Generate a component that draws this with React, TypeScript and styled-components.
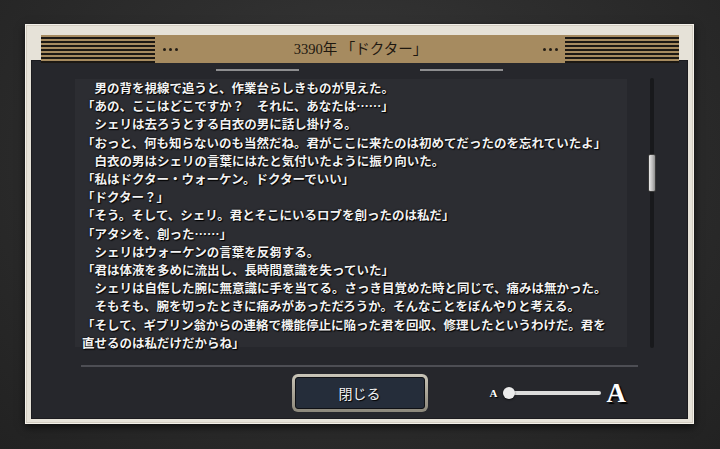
import styled, { createGlobalStyle } from "styled-components";

const GlobalStyle = createGlobalStyle`
  html,
  body {
    margin: 0;
    padding: 0;
    width: 720px;
    height: 449px;
    overflow: hidden;
  }

  body {
    background: #2a2a2a;
    font-family: "Liberation Serif", "Noto Sans CJK JP", serif;
  }
`;

const Screen = styled.div`
  box-sizing: border-box;
  width: 720px;
  height: 449px;
  padding: 24px 26px 25px 25px;
  background: radial-gradient(
    ellipse at 50% 35%,
    #3b3b3b 0%,
    #2e2e2e 45%,
    #222222 100%
  );
`;

const Frame = styled.section`
  box-sizing: border-box;
  display: flex;
  height: 400px;
  flex-direction: column;
  padding: 10px 5px 4px;
  border: 1px solid #f4f1ea;
  background: #e6e2d8;
  box-shadow:
    0 3px 8px rgba(0, 0, 0, 0.65),
    inset 0 0 0 1px #d2ccc0;
`;

const HeaderBand = styled.header`
  position: relative;
  z-index: 1;
  display: grid;
  height: 28px;
  grid-template-columns: 114px auto 1fr auto 114px;
  align-items: center;
  margin: 0 9px -3px 10px;
  background: #a68b60;
`;

const Stripes = styled.div`
  height: 100%;
  background: repeating-linear-gradient(
    to bottom,
    #a68b60 0 2px,
    #1c1813 2px 4px
  );
`;

const Dots = styled.div<{ $side: "left" | "right" }>`
  display: flex;
  gap: 3px;
  margin: ${({ $side }) => ($side === "left" ? "0 0 0 8px" : "0 7px 0 0")};

  span {
    width: 3px;
    height: 3px;
    border-radius: 50%;
    background: #231d15;
  }
`;

const Title = styled.h1`
  margin: 0;
  color: #1e1810;
  font-size: 14.5px;
  font-weight: 400;
  line-height: 1;
  text-align: center;
  white-space: nowrap;
`;

const Panel = styled.div`
  display: flex;
  flex: 1;
  flex-direction: column;
  background: #26272c;
  box-shadow: inset 0 0 0 1px #1b1b1f;
`;

const Ornaments = styled.div`
  display: flex;
  justify-content: center;
  gap: 121px;
  margin-top: 9px;
`;

const Ornament = styled.div`
  width: 83px;
  height: 2px;
  background: #8e8e90;
`;

const Body = styled.div`
  display: flex;
  height: 275px;
  margin-top: 7px;
  padding-left: 44px;
`;

const TextBox = styled.div`
  box-sizing: border-box;
  width: 552px;
  height: 275px;
  padding: 1px 0 0 7px;
  overflow: hidden;
  background: linear-gradient(
    to bottom,
    transparent 0 1px,
    #2c2d32 1px 269px,
    transparent 269px
  );
`;

const Log = styled.div`
  width: 530px;
  color: #f2f2f2;
  font-family: "Noto Sans CJK JP", sans-serif;
  font-size: 12.5px;
  font-weight: 700;
  line-height: 18.2px;
  text-shadow:
    1px 1px 1px #000,
    0 0 2px #000;
`;

const Line = styled.p`
  margin: 0;
`;

const ScrollTrack = styled.div`
  position: relative;
  width: 4px;
  height: 270px;
  margin-left: 23px;
  border-radius: 2px;
  background: #18191c;
`;

const ScrollThumb = styled.div`
  position: absolute;
  top: 76px;
  left: -2px;
  box-sizing: border-box;
  width: 8px;
  height: 38px;
  border: 1px solid #3a3a3a;
  border-radius: 2px;
  background: linear-gradient(to right, #eaeaea, #b9b9b9 60%, #8e8e8e);
`;

const Separator = styled.hr`
  width: 557px;
  height: 2px;
  margin: 12px 0 0 50px;
  border: 0;
  background: #4d4e54;
`;

const Footer = styled.div`
  display: grid;
  grid-template-columns: 1fr auto 1fr;
  align-items: center;
  margin-top: 7px;
`;

const CloseButton = styled.button`
  grid-column: 2;
  box-sizing: border-box;
  width: 136px;
  height: 38px;
  padding: 3px;
  border: 0;
  border-radius: 6px;
  background: linear-gradient(to bottom, #c9c5b8, #a6a194 55%, #8c887b);
  cursor: pointer;
`;

const ButtonFace = styled.span`
  display: flex;
  box-sizing: border-box;
  height: 100%;
  align-items: center;
  justify-content: center;
  border: 1px solid #0f1115;
  border-radius: 3px;
  background: #252d3a;
  color: #f2f2f2;
  font-family: "Noto Sans CJK JP", sans-serif;
  font-size: 14px;
  text-shadow: 1px 1px 1px #000;
`;

const SizeControl = styled.div`
  display: flex;
  align-items: center;
  padding-left: 62px;
`;

const SizeGlyph = styled.span<{ $big?: boolean }>`
  color: #ffffff;
  font-family: "Liberation Serif", serif;
  font-size: ${({ $big }) => ($big ? "27px" : "11px")};
  font-weight: 700;
  line-height: 1;
  text-shadow: ${({ $big }) =>
    $big ? "2px 2px 1px #000" : "1px 1px 1px #000"};
  margin: ${({ $big }) => ($big ? "0 0 0 5px" : "0 6px 0 0")};
`;

const SizeTrack = styled.div`
  position: relative;
  width: 98px;
  height: 4px;
  border-radius: 2px;
  background: #dcdcdc;
`;

const SizeKnob = styled.div`
  position: absolute;
  top: -4px;
  left: 0;
  width: 12px;
  height: 12px;
  border-radius: 50%;
  background: #ececec;
  box-shadow: 0 1px 2px rgba(0, 0, 0, 0.6);
`;

const lines = [
  "　男の背を視線で追うと、作業台らしきものが見えた。",
  "「あの、ここはどこですか？　それに、あなたは……」",
  "　シェリは去ろうとする白衣の男に話し掛ける。",
  "「おっと、何も知らないのも当然だね。君がここに来たのは初めてだったのを忘れていたよ」",
  "　白衣の男はシェリの言葉にはたと気付いたように振り向いた。",
  "「私はドクター・ウォーケン。ドクターでいい」",
  "「ドクター？」",
  "「そう。そして、シェリ。君とそこにいるロブを創ったのは私だ」",
  "「アタシを、創った……」",
  "　シェリはウォーケンの言葉を反芻する。",
  "「君は体液を多めに流出し、長時間意識を失っていた」",
  "　シェリは自傷した腕に無意識に手を当てる。さっき目覚めた時と同じで、痛みは無かった。",
  "　そもそも、腕を切ったときに痛みがあっただろうか。そんなことをぼんやりと考える。",
  "「そして、ギブリン翁からの連絡で機能停止に陥った君を回収、修理したというわけだ。君を直せるのは私だけだからね」",
];

export default function App() {
  return (
    <Screen>
      <GlobalStyle />
      <Frame aria-label="バックログ">
        <HeaderBand>
          <Stripes />
          <Dots $side="left">
            <span />
            <span />
            <span />
          </Dots>
          <Title>3390年 「ドクター」</Title>
          <Dots $side="right">
            <span />
            <span />
            <span />
          </Dots>
          <Stripes />
        </HeaderBand>

        <Panel>
          <Ornaments>
            <Ornament />
            <Ornament />
          </Ornaments>

          <Body>
            <TextBox>
              <Log>
                {lines.map((line, i) => (
                  <Line key={i}>{line}</Line>
                ))}
              </Log>
            </TextBox>
            <ScrollTrack>
              <ScrollThumb />
            </ScrollTrack>
          </Body>

          <Separator />

          <Footer>
            <CloseButton type="button">
              <ButtonFace>閉じる</ButtonFace>
            </CloseButton>
            <SizeControl aria-label="文字サイズ">
              <SizeGlyph>A</SizeGlyph>
              <SizeTrack>
                <SizeKnob />
              </SizeTrack>
              <SizeGlyph $big>A</SizeGlyph>
            </SizeControl>
          </Footer>
        </Panel>
      </Frame>
    </Screen>
  );
}
